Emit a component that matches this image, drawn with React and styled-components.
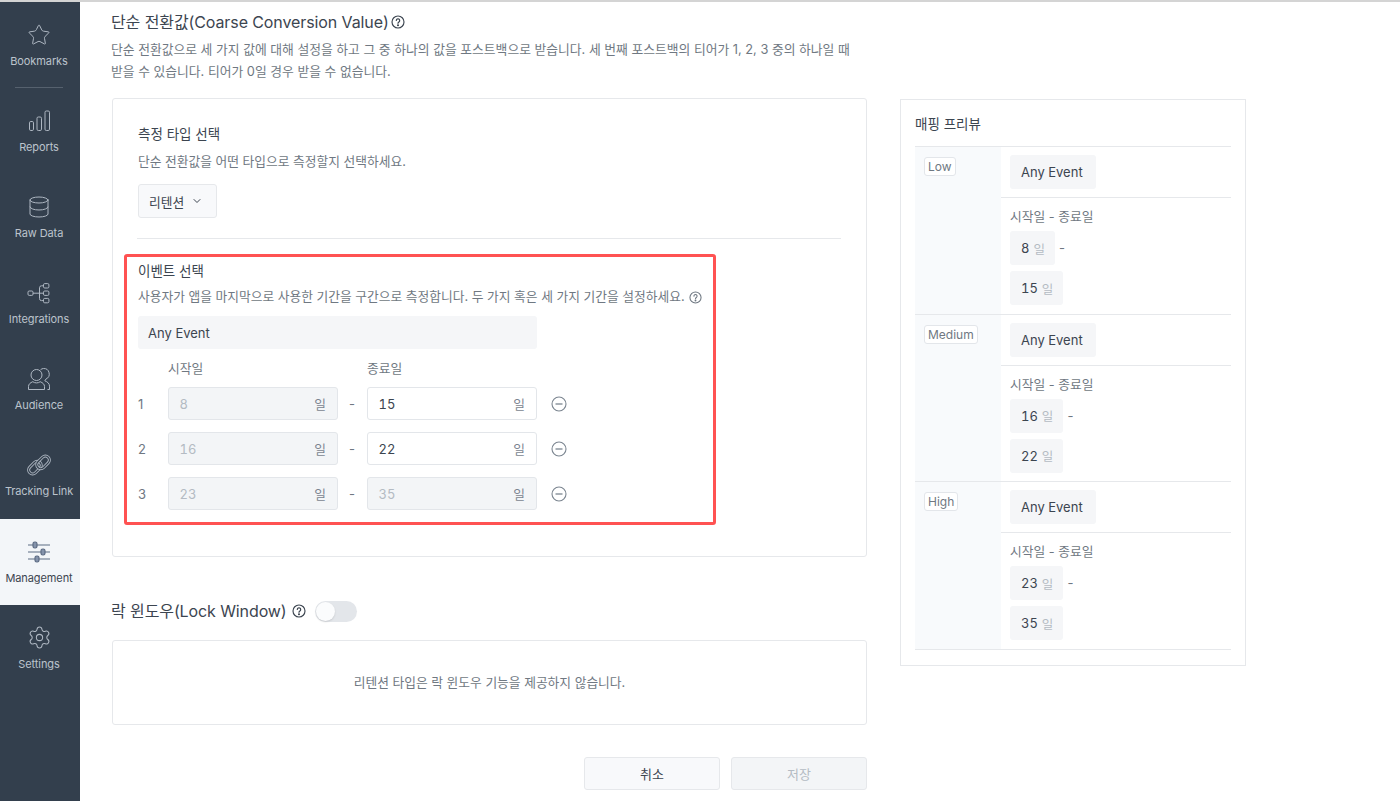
import React from 'react'
import styled, { createGlobalStyle } from 'styled-components'
import { Star, Database, Settings, ChevronDown } from 'lucide-react'

const Global = createGlobalStyle`
  html, body { margin:0; padding:0; background:#fff; }
  body {
    font-family:Inter, "Noto Sans CJK KR", sans-serif;
    color:#3c4550;
    -webkit-font-smoothing:antialiased;
  }
`

const BarsIcon = () => <svg width="24" height="24" viewBox="0 0 24 24" fill="none" stroke="currentColor" strokeWidth="1">
  <rect x="2.500" y="12.500" width="4" height="9" rx="1.300" />
  <rect x="10" y="8" width="4.500" height="13.500" rx="1.300" />
  <rect x="18" y="2" width="4.500" height="19.500" rx="1.300" />
</svg>

const TreeIcon = () => <svg width="24" height="24" viewBox="0 0 24 24" fill="none" stroke="currentColor" strokeWidth="1">
  <rect x="1" y="10" width="5" height="4.400" rx="1.200" />
  <rect x="16.500" y="2.600" width="5.400" height="4.400" rx="1.200" />
  <rect x="16.500" y="10" width="5.400" height="4.400" rx="1.200" />
  <rect x="16.500" y="17.400" width="5.400" height="4.400" rx="1.200" />
  <path d="M6 12.200h10.500M16.500 4.800h-2a2 2 0 0 0-2 2v10.800a2 2 0 0 0 2 2h2" />
</svg>

const PeopleIcon = () => <svg width="24" height="24" viewBox="0 0 24 24" fill="none" stroke="currentColor" strokeWidth="1">
  <circle cx="9.500" cy="8" r="5.500" />
  <path d="M1.500 22.500v-3c0-2.300 1.700-3.700 4.300-4.800 1 .8 2.300 1.200 3.700 1.200s2.700-.4 3.700-1.200c2.600 1.100 4.300 2.500 4.300 4.800v3z" />
  <path d="M13.500 2.800c.9-.8 2-1.300 3-1.300a5.500 5.500 0 0 1 2.500 10.500c-.4.700-.8 1.300-1.200 1.800 2.800 1.100 4.700 2.700 4.700 5.400v3.300h-2" />
</svg>

const LinkIcon = () => <svg width="24" height="24" viewBox="0 0 24 24" fill="none">
  <g transform="rotate(-45 12 12)">
    <rect x="0" y="7" width="14.500" height="8" rx="4" stroke="currentColor" strokeWidth="3" />
    <rect x="0" y="7" width="14.500" height="8" rx="4" stroke="#333f4d" strokeWidth="1.300" />
    <rect x="9.500" y="9" width="14.500" height="8" rx="4" stroke="currentColor" strokeWidth="3" />
    <rect x="9.500" y="9" width="14.500" height="8" rx="4" stroke="#333f4d" strokeWidth="1.300" />
  </g>
</svg>

const SlidersIcon = () => <svg width="24" height="24" viewBox="0 0 24 24" fill="none" stroke="currentColor" strokeWidth="1.200">
  <path d="M1 5h5M10 5h13M1 12h13M18 12h5M1 19h7M12 19h11" />
  <rect x="6" y="2" width="4" height="6" rx="1.800" fill="#8493ab" />
  <rect x="14" y="9" width="4" height="6" rx="1.800" fill="#8493ab" />
  <rect x="8" y="16" width="4" height="6" rx="1.800" fill="#8493ab" />
</svg>

const HelpIcon = ({size=14}) => <svg width={size} height={size} viewBox="0 0 14 14" fill="none" stroke="currentColor" strokeWidth="1.150">
  <circle cx="7" cy="7" r="6" />
  <path d="M5.300 5.500a1.700 1.700 0 1 1 2.600 1.500c-.6.400-.9.700-.9 1.300" strokeLinecap="round" />
  <circle cx="7" cy="10.200" r=".45" fill="currentColor" />
</svg>

const MinusIcon = () => <svg width="16" height="16" viewBox="0 0 16 16" fill="none" stroke="#7b8590" strokeWidth="1.100">
  <circle cx="8" cy="8" r="7" />
  <path d="M4.500 8h7" strokeWidth="1.300" />
</svg>

const Page = styled.div`
  display:flex;
  width:1400px;
  height:801px;
  overflow:hidden;
  border-top:2px solid #d4d4d4;
  box-sizing:border-box;
`
const Sidebar = styled.nav`
  width:80px;
  flex:none;
  background:#333f4d;
  padding-top:1px;
`
const NavItem = styled.div`
  position:relative;
  height:86px;
  box-sizing:border-box;
  padding:${p=> p.active ? 21 : 20}px 2px 0 0;
  display:flex;
  flex-direction:column;
  align-items:center;
  background:${p=> p.active ? '#f3f6f9' : 'transparent'};
  color:${p=> p.active ? '#5d6c84' : '#aeb7c2'};
`
const NavIcon = styled.div`
  height:24px;
  display:flex;
  align-items:center;
  justify-content:center;
`
const NavLabel = styled.div`
  margin-top:${p=> p.low ? 7 : 6}px;
  font-size:11px;
  line-height:16px;
  white-space:nowrap;
  letter-spacing:-.1px;
  color:${p=> p.active ? '#3c4550' : '#bcc3cc'};
`
const NavDivider = styled.div`
  position:absolute;
  left:15px;
  right:17px;
  bottom:1px;
  height:1px;
  background:#56616e;
`
const Main = styled.main`
  flex:1;
  display:flex;
  align-items:flex-start;
  gap:33px;
  padding-left:32px;
`
const Left = styled.div`
  width:755px;
  flex:none;
`
const Heading = styled.h2`
  display:flex;
  align-items:center;
  gap:${p=> p.gap || 2}px;
  margin:${p=> p.top || 8}px 0 0 -1px;
  height:24px;
  font-size:16px;
  line-height:24px;
  font-weight:400;
  letter-spacing:-.1px;
  color:#3c4550;
`
const Description = styled.p`
  margin:5px 0 15px -1px;
  font-size:12.8px;
  line-height:22px;
  color:#6f7882;
`
const Card = styled.section`
  box-sizing:border-box;
  border:1px solid #e6e8eb;
  border-radius:3px;
  padding:25px;
`
const SubTitle = styled.div`
  font-size:13.5px;
  line-height:20px;
  color:#3c4550;
`
const Hint = styled.div`
  display:flex;
  align-items:center;
  gap:4px;
  margin-top:${p=> p.top}px;
  font-size:12.75px;
  line-height:20px;
  color:#6f7882;
  white-space:nowrap;
`
const Dropdown = styled.div`
  display:flex;
  width:fit-content;
  align-items:center;
  gap:7px;
  height:34px;
  box-sizing:border-box;
  margin-top:12px;
  padding:0 13px 0 10px;
  background:#f8f9fb;
  border:1px solid #e6e8eb;
  border-radius:3px;
  font-size:12.75px;
  color:#3c4550;
`
const Divider = styled.div`
  height:1px;
  background:#e6e8eb;
  margin:20px 0 15px -1px;
`
const Highlight = styled.div`
  margin:0 0 6px -14px;
  width:592px;
  box-sizing:border-box;
  border:3px solid #ff5252;
  border-radius:3px;
  padding:4px 0 12px 11px;
`
const EventBox = styled.div`
  width:399px;
  height:33px;
  margin-top:9px;
  padding-left:10px;
  box-sizing:border-box;
  display:flex;
  align-items:center;
  background:#f5f6f8;
  border-radius:3px;
  font-size:13px;
  color:#3c4550;
`
const ColLabels = styled.div`
  display:flex;
  padding-left:30px;
  margin-top:10px;
  font-size:12.75px;
  line-height:20px;
  color:#6f7882;
`
const ColLabel = styled.div`
  width:199px;
`
const RangeRow = styled.div`
  display:flex;
  align-items:center;
  height:33px;
  margin-top:${p=> p.first ? 8 : 12}px;
`
const RowNum = styled.div`
  width:30px;
  font-size:13px;
  color:#6f7882;
`
const DayField = styled.div`
  width:170px;
  height:33px;
  box-sizing:border-box;
  display:flex;
  align-items:center;
  justify-content:space-between;
  padding:0 11px 0 10.500px;
  border:1px solid #e3e6ea;
  border-radius:3px;
  background:${p=> p.disabled ? '#f3f5f7' : '#fff'};
  font-size:13px;
  font-variant-numeric:tabular-nums;
  color:${p=> p.disabled ? '#b4bbc3' : '#3c4550'};
`
const Unit = styled.span`
  font-size:12.75px;
  color:#7b8590;
`
const Dash = styled.div`
  width:29px;
  padding-right:1px;
  box-sizing:border-box;
  text-align:center;
  font-size:13px;
  color:#6f7882;
`
const RemoveBtn = styled.div`
  margin-left:14px;
  display:flex;
`
const Toggle = styled.div`
  position:relative;
  width:42px;
  height:21px;
  margin-left:4px;
  border-radius:11px;
  background:#e3e6ea;
  &::after {
    content:'';
    position:absolute;
    left:1px;
    top:1px;
    width:19px;
    height:19px;
    border-radius:50%;
    background:#fbfcfd;
    box-shadow:0 1px 2px rgba(0,0,0,.12);
  }
`
const LockCard = styled(Card)`
  height:85px;
  margin-top:17px;
  display:flex;
  align-items:center;
  justify-content:center;
  padding:0 0 2px;
  font-size:12.75px;
  color:#6f7882;
`
const Actions = styled.div`
  display:flex;
  justify-content:flex-end;
  gap:11px;
  margin-top:32px;
`
const Btn = styled.div`
  width:136px;
  height:33px;
  box-sizing:border-box;
  display:flex;
  align-items:center;
  justify-content:center;
  border:1px solid #e6e8eb;
  border-radius:3px;
  background:${p=> p.disabled ? '#f3f5f7' : '#f8f9fb'};
  font-size:13px;
  color:${p=> p.disabled ? '#b4bbc3' : '#3c4550'};
`
const Preview = styled.aside`
  width:346px;
  margin-top:97px;
  flex:none;
  box-sizing:border-box;
  border:1px solid #e6e8eb;
  padding:14px 14px 15px;
`
const PreviewTitle = styled.div`
  font-size:13.5px;
  line-height:20px;
  margin-bottom:12px;
  color:#3c4550;
`
const Tier = styled.div`
  display:flex;
  border-top:1px solid #e6e8eb;
  &:last-child { border-bottom:1px solid #e6e8eb; }
`
const TierName = styled.div`
  width:86px;
  flex:none;
  box-sizing:border-box;
  background:#f8fafc;
  padding:8px 9px;
`
const Badge = styled.span`
  display:inline-block;
  height:19px;
  box-sizing:border-box;
  padding:0 3px;
  border:1px solid #e3e6ea;
  border-radius:3px;
  background:#fff;
  font-size:12px;
  line-height:17px;
  color:#6f7882;
`
const TierBody = styled.div`
  flex:1;
`
const TierEvent = styled.div`
  padding:8px 9px;
  border-bottom:1px solid #e6e8eb;
`
const Chip = styled.div`
  display:inline-flex;
  align-items:center;
  gap:4px;
  height:34px;
  padding:0 ${p=> p.event ? 13 : 10}px 0 11px;
  background:#f5f6f8;
  border-radius:3px;
  font-size:13px;
  font-variant-numeric:tabular-nums;
  color:#3c4550;
  vertical-align:top;
`
const ChipUnit = styled.span`
  font-size:12.5px;
  color:#b4bbc3;
`
const TierDates = styled.div`
  padding:9px 9px 8.500px;
`
const DatesLabel = styled.div`
  font-size:12.75px;
  line-height:20px;
  margin-bottom:4px;
  color:#6f7882;
`
const DateRow = styled.div`
  display:flex;
  align-items:center;
  gap:4px;
  margin-top:${p=> p.second ? 6 : 0}px;
  font-size:13px;
  color:#6f7882;
`

const navItems = [
  { label:'Bookmarks', icon:<Star size={24} strokeWidth={1} />, divider:true },
  { label:'Reports', icon:<BarsIcon /> },
  { label:'Raw Data', icon:<Database size={24} strokeWidth={1} /> },
  { label:'Integrations', icon:<TreeIcon /> },
  { label:'Audience', icon:<PeopleIcon /> },
  { label:'Tracking Link', icon:<LinkIcon /> },
  { label:'Management', icon:<SlidersIcon />, active:true },
  { label:'Settings', icon:<Settings size={25} strokeWidth={1} />, low:true },
]

const ranges = [
  { start:8, end:15 },
  { start:16, end:22 },
  { start:23, end:35, locked:true },
]

const tiers = [
  { name:'Low', start:8, end:15 },
  { name:'Medium', start:16, end:22 },
  { name:'High', start:23, end:35 },
]

export default function App() {
  return <Page>
    <Global />
    <Sidebar>
      {navItems.map(n => <NavItem key={n.label} active={n.active}>
        <NavIcon>{n.icon}</NavIcon>
        <NavLabel active={n.active} low={n.low}>{n.label}</NavLabel>
        {n.divider && <NavDivider />}
      </NavItem>)}
    </Sidebar>
    <Main>
      <Left>
        <Heading>단순 전환값(Coarse Conversion Value) <HelpIcon /></Heading>
        <Description>
          단순 전환값으로 세 가지 값에 대해 설정을 하고 그 중 하나의 값을 포스트백으로 받습니다. 세 번째 포스트백의 티어가 1, 2, 3 중의 하나일 때<br />
          받을 수 있습니다. 티어가 0일 경우 받을 수 없습니다.
        </Description>
        <Card>
          <SubTitle>측정 타입 선택</SubTitle>
          <Hint top={8}>단순 전환값을 어떤 타입으로 측정할지 선택하세요.</Hint>
          <Dropdown>리텐션 <ChevronDown size={12} strokeWidth={2} /></Dropdown>
          <Divider />
          <Highlight>
            <SubTitle>이벤트 선택</SubTitle>
            <Hint top={6}>사용자가 앱을 마지막으로 사용한 기간을 구간으로 측정합니다. 두 가지 혹은 세 가지 기간을 설정하세요. <HelpIcon size={13} /></Hint>
            <EventBox>Any Event</EventBox>
            <ColLabels>
              <ColLabel>시작일</ColLabel>
              <ColLabel>종료일</ColLabel>
            </ColLabels>
            {ranges.map((r, i) => <RangeRow key={i} first={i === 0}>
              <RowNum>{i + 1}</RowNum>
              <DayField disabled>{r.start}<Unit>일</Unit></DayField>
              <Dash>-</Dash>
              <DayField disabled={r.locked}>{r.end}<Unit>일</Unit></DayField>
              <RemoveBtn><MinusIcon /></RemoveBtn>
            </RangeRow>)}
          </Highlight>
        </Card>
        <Heading top={42} gap={5}>락 윈도우(Lock Window) <HelpIcon /><Toggle /></Heading>
        <LockCard>리텐션 타입은 락 윈도우 기능을 제공하지 않습니다.</LockCard>
        <Actions>
          <Btn>취소</Btn>
          <Btn disabled>저장</Btn>
        </Actions>
      </Left>
      <Preview>
        <PreviewTitle>매핑 프리뷰</PreviewTitle>
        {tiers.map(t => <Tier key={t.name}>
          <TierName><Badge>{t.name}</Badge></TierName>
          <TierBody>
            <TierEvent><Chip event>Any Event</Chip></TierEvent>
            <TierDates>
              <DatesLabel>시작일 - 종료일</DatesLabel>
              <DateRow><Chip>{t.start} <ChipUnit>일</ChipUnit></Chip> -</DateRow>
              <DateRow second><Chip>{t.end} <ChipUnit>일</ChipUnit></Chip></DateRow>
            </TierDates>
          </TierBody>
        </Tier>)}
      </Preview>
    </Main>
  </Page>
}
